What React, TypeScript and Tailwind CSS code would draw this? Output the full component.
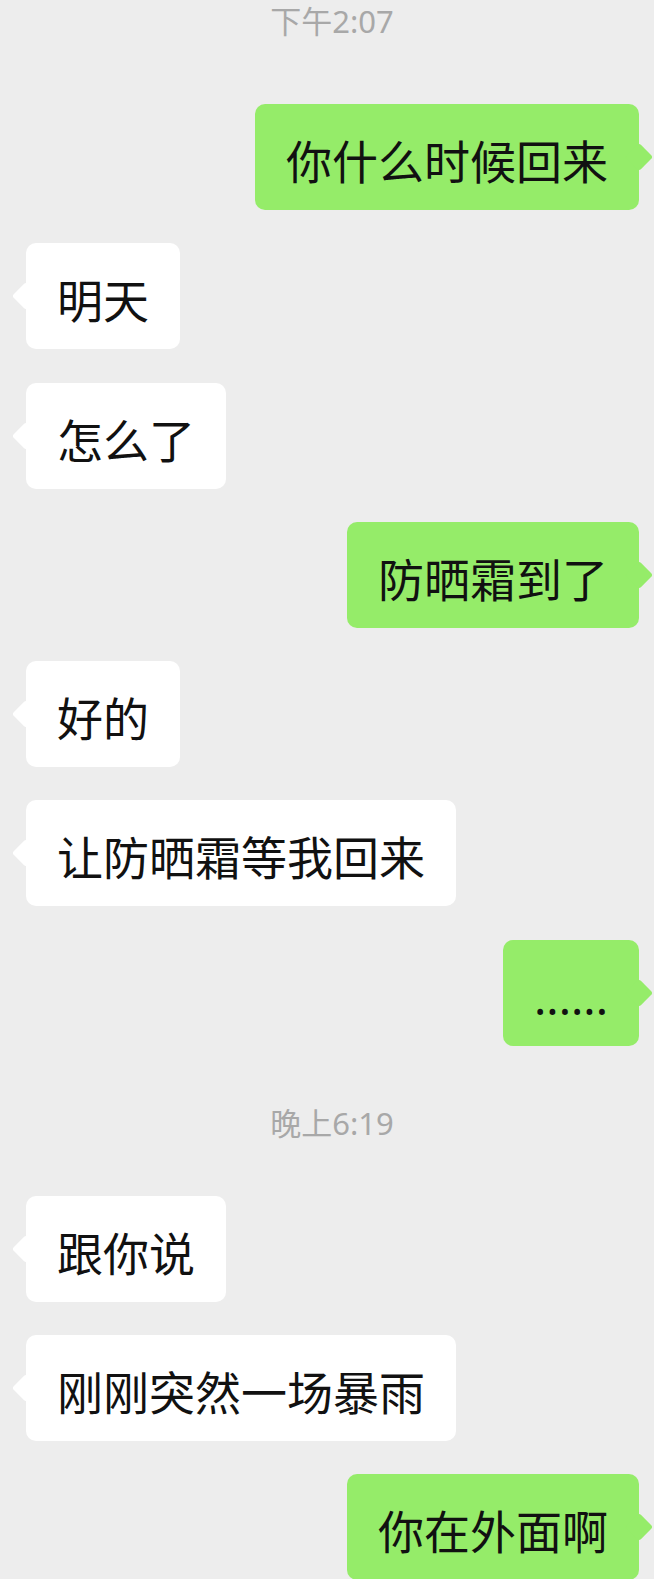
import React from "react";

type Msg = { side: "l" | "r"; text: string };

function Bubble({ side, text }: Msg) {
  const isRight = side === "r";
  return (
    <div className={isRight ? "flex justify-end pr-[15px]" : "flex justify-start pl-[26px]"}>
      <div
        className={
          isRight
            ? "relative rounded-[10px] bg-[#95ec69] px-[31px] pt-[34px] pb-[26px] text-[46px] leading-[46px] text-[#111111] whitespace-nowrap"
            : "relative rounded-[10px] bg-white px-[31px] pt-[34px] pb-[26px] text-[46px] leading-[46px] text-[#111111] whitespace-nowrap"
        }
      >
        <div
          className={
            isRight
              ? "absolute top-1/2 right-[-10px] h-[20px] w-[20px] -translate-y-1/2 rotate-45 rounded-[3px] bg-[#95ec69]"
              : "absolute top-1/2 left-[-10px] h-[20px] w-[20px] -translate-y-1/2 rotate-45 rounded-[3px] bg-white"
          }
        />
        <span className="relative">{text}</span>
      </div>
    </div>
  );
}

export default function App() {
  const first: Msg[] = [
    { side: "r", text: "你什么时候回来" },
    { side: "l", text: "明天" },
    { side: "l", text: "怎么了" },
    { side: "r", text: "防晒霜到了" },
    { side: "l", text: "好的" },
    { side: "l", text: "让防晒霜等我回来" },
    { side: "r", text: "......" },
  ];
  const second: Msg[] = [
    { side: "l", text: "跟你说" },
    { side: "l", text: "刚刚突然一场暴雨" },
    { side: "r", text: "你在外面啊" },
  ];
  return (
    <div className="min-h-[1579px] w-full overflow-hidden bg-[#ededed] font-['Noto_Sans','Noto_Sans_CJK_SC',sans-serif]">
      <div className="flex justify-center pt-[6px] pl-[10px] text-[31px] leading-[31px] text-[#a8a8a8]">
        下午2:07
      </div>
      <div className="mt-[67px] flex flex-col gap-[33.3px]">
        {first.map((m, i) => (
          <Bubble key={i} {...m} />
        ))}
      </div>
      <div className="mt-[62px] flex justify-center pl-[10px] text-[31px] leading-[31px] text-[#a8a8a8]">
        晚上6:19
      </div>
      <div className="mt-[57px] flex flex-col gap-[33.3px]">
        {second.map((m, i) => (
          <Bubble key={i} {...m} />
        ))}
      </div>
    </div>
  );
}
